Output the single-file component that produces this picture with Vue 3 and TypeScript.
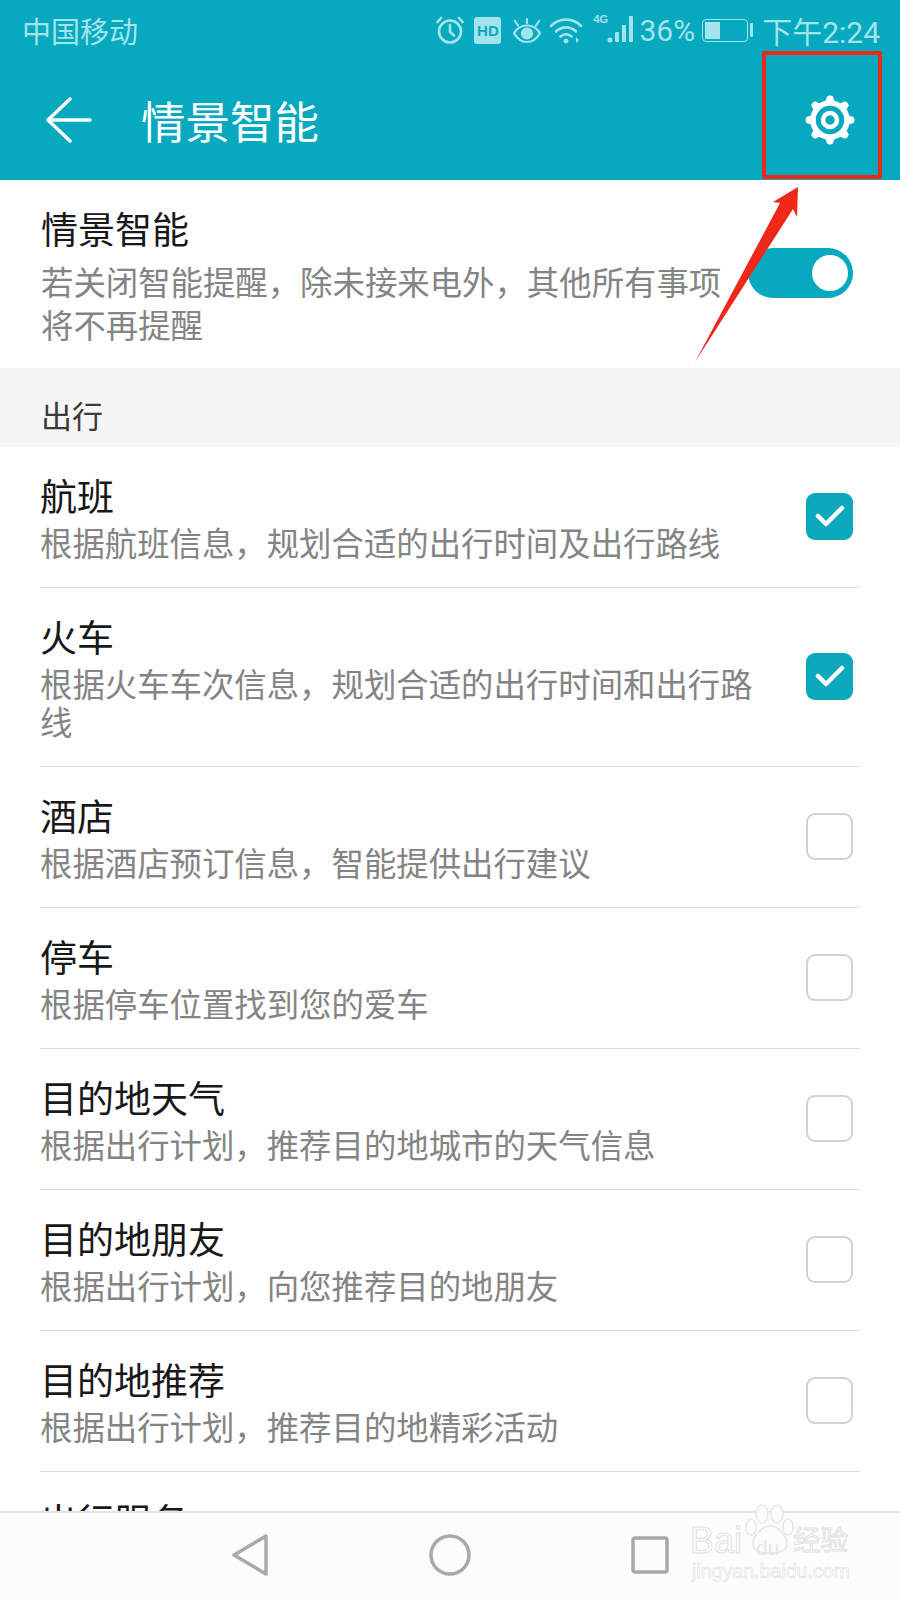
<template>
  <div class="phone">
    <header class="appbar">
      <div class="status">
        <span class="carrier">中国移动</span>
        <div class="status-right">
          <svg class="st-icon" width="28" height="28" viewBox="0 0 28 28" fill="none" stroke="currentColor" stroke-width="2.6" stroke-linecap="round">
            <circle cx="14" cy="15.500" r="11" />
            <path d="M14 9v7l4 3.500M1.500 6 5 2M26.500 6 23 2" />
          </svg>
          <span class="hd">HD</span>
          <svg class="st-icon eye" width="30" height="28" viewBox="0 0 30 28" fill="none" stroke="currentColor" stroke-width="2.200" stroke-linecap="round">
            <path d="M2 17c3-5 7.500-7.500 13-7.500S25 12 28 17c-3 5.500-7.500 9-13 9S5 22.500 2 17Z" />
            <circle cx="15" cy="17.500" r="5" fill="currentColor" />
            <path d="M6 9.500 3 5M24 9.500 27 5M15 7V3" />
          </svg>
          <svg class="st-icon" width="34" height="28" viewBox="0 0 34 28" fill="none" stroke="currentColor" stroke-width="2.600" stroke-linecap="round">
            <path d="M2 10C10 1.500 24 1.500 32 10M7 15.500c5.500-5.500 14.500-5.500 20 0M11.500 20.500c3-3 8-3 11 0" />
            <circle cx="17" cy="25" r="2.400" fill="currentColor" stroke="none" />
            <path d="M27 21v6l3-3Z" fill="currentColor" stroke="none" />
          </svg>
          <div class="signal">
            <span class="four-g">4G</span>
            <svg width="30" height="28" viewBox="0 0 30 28" fill="currentColor">
              <circle cx="3" cy="25" r="2.500" />
              <rect x="8" y="17" width="4" height="10" rx="1" />
              <rect x="15" y="10" width="4" height="17" rx="1" />
              <rect x="22" y="1" width="4" height="26" rx="1" />
            </svg>
          </div>
          <span class="percent">36%</span>
          <div class="battery">
            <div class="battery-body"><i class="battery-level" :style="{ width: batteryLevel + '%' }"></i></div>
            <i class="battery-nub"></i>
          </div>
          <span class="clock">下午2:24</span>
        </div>
      </div>

      <div class="toolbar">
        <svg class="back" width="46" height="46" viewBox="0 0 46 46" fill="none" stroke="currentColor" stroke-width="3.400" stroke-linecap="round" stroke-linejoin="round">
          <path d="M24 2 2 23l22 21M2 23h42" />
        </svg>
        <h1 class="title">情景智能</h1>
        <svg class="gear" width="52" height="52" viewBox="0 0 52 52" fill="none" stroke="#fff">
          <circle cx="26" cy="26" r="17" stroke-width="5.500" />
          <circle cx="26" cy="26" r="7" stroke-width="4.500" />
          <path v-for="a in gearTeeth" :key="a" :transform="`rotate(${a} 26 26)`" d="M21 9 23 2.500Q26 .5 29 2.500L31 9Z" fill="#fff" stroke="none" />
        </svg>
      </div>
    </header>

    <main class="content">
      <section class="master">
        <div class="master-text">
          <div class="row-title">情景智能</div>
          <div class="row-desc master-desc">若关闭智能提醒，除未接来电外，其他所有事项将不再提醒</div>
        </div>
        <div class="switch"><i class="knob"></i></div>
      </section>

      <div class="section-head">出行</div>

      <div class="list">
        <div v-for="item in items" :key="item.title" class="row">
          <div class="row-text">
            <div class="row-title">{{ item.title }}</div>
            <div v-if="item.desc" class="row-desc">{{ item.desc }}</div>
          </div>
          <div v-if="item.desc" class="check" :class="{ on: item.checked }">
            <svg v-if="item.checked" width="30" height="24" viewBox="0 0 30 24" fill="none" stroke="#fff" stroke-width="4.500" stroke-linecap="round" stroke-linejoin="round">
              <path d="M3 12l8 8L27 4" />
            </svg>
          </div>
        </div>
      </div>
    </main>

    <nav class="navbar">
      <svg width="38" height="42" viewBox="0 0 38 42" fill="none" stroke="#a9a9a9" stroke-width="3.500" stroke-linejoin="round">
        <path d="M35 2v38L3 21Z" />
      </svg>
      <svg width="42" height="42" viewBox="0 0 42 42" fill="none" stroke="#a9a9a9" stroke-width="3.500">
        <circle cx="21" cy="21" r="19" />
      </svg>
      <svg width="38" height="38" viewBox="0 0 38 38" fill="none" stroke="#a9a9a9" stroke-width="3.500" stroke-linejoin="round">
        <rect x="2" y="2" width="34" height="34" rx="2" />
      </svg>
    </nav>

    <!-- annotations drawn over the screenshot -->
    <div class="red-box"></div>
    <svg class="red-arrow" width="120" height="190" viewBox="0 0 120 190">
      <path d="M118 2 117 32 113 24 15 177 100 18 93 17Z" fill="#f0281a" />
    </svg>
    <div class="watermark">
      <svg class="paw" width="50" height="52" viewBox="0 0 50 52" fill="#fcfcfc" stroke="#e6e6e6" stroke-width="1.500">
        <ellipse cx="17" cy="11" rx="6" ry="9" />
        <ellipse cx="32" cy="11" rx="6" ry="9" />
        <ellipse cx="6" cy="24" rx="5" ry="8" />
        <ellipse cx="43" cy="24" rx="5" ry="8" />
        <path d="M25 23c-7 0-17 9-17 18 0 6 5 9 17 9s17-3 17-9c0-9-10-18-17-18Z" />
      </svg>
      <span class="wm-bai">Bai</span>
      <span class="wm-du">du</span>
      <span class="wm-cn">经验</span>
      <span class="wm-url">jingyan.baidu.com</span>
    </div>
  </div>
</template>

<script setup lang="ts">
interface Item {
  title: string;
  desc?: string;
  checked?: boolean;
}

const batteryLevel = 36;
const gearTeeth = [0, 45, 90, 135, 180, 225, 270, 315];

const items: Item[] = [
  { title: '航班', desc: '根据航班信息，规划合适的出行时间及出行路线', checked: true },
  { title: '火车', desc: '根据火车车次信息，规划合适的出行时间和出行路线', checked: true },
  { title: '酒店', desc: '根据酒店预订信息，智能提供出行建议' },
  { title: '停车', desc: '根据停车位置找到您的爱车' },
  { title: '目的地天气', desc: '根据出行计划，推荐目的地城市的天气信息' },
  { title: '目的地朋友', desc: '根据出行计划，向您推荐目的地朋友' },
  { title: '目的地推荐', desc: '根据出行计划，推荐目的地精彩活动' },
  { title: '出行服务' },
];
</script>

<style>
html, body { margin: 0; background: #fdfdfd; }
</style>

<style scoped>
.phone {
  position: relative;
  width: 900px;
  height: 1600px;
  display: flex;
  flex-direction: column;
  overflow: hidden;
  background: #fefefe;
  font-family: "Noto Sans CJK SC", "Liberation Sans", sans-serif;
}

.appbar { height: 180px; flex-shrink: 0; background: #07a9bf; color: #fff; }

.status {
  height: 60px;
  display: flex;
  align-items: center;
  justify-content: space-between;
  padding: 0 20px 0 22px;
  color: #a3e4ec;
  font-size: 29px;
}
.status-right { display: flex; align-items: center; }
.st-icon { margin-right: 10px; }
.st-icon.eye { margin-right: 7px; }
.hd {
  width: 27px;
  height: 27px;
  margin-right: 11px;
  border-radius: 3px;
  background: #a3e4ec;
  color: #07a9bf;
  font: 700 15px/27px "Liberation Sans", sans-serif;
  text-align: center;
}
.signal { position: relative; width: 44px; height: 30px; display: flex; justify-content: flex-end; }
.four-g { position: absolute; left: 0; top: -3px; font: 700 11px/14px "Liberation Sans", sans-serif; }
.percent { margin-left: 2px; font-family: "Roboto", sans-serif; font-size: 30px; }
.battery { display: flex; align-items: center; margin-left: 7px; }
.battery-body { width: 46px; height: 23px; box-sizing: border-box; border: 1.500px solid #a3e4ec; border-radius: 4px; padding: 2px; }
.battery-level { display: block; height: 100%; background: #a3e4ec; }
.battery-nub { width: 3px; height: 14px; margin-left: 2px; background: #a3e4ec; border-radius: 1px; }
.clock { margin-left: 9px; font-family: "Roboto", "Noto Sans CJK SC", sans-serif; font-size: 30px; }

.toolbar { height: 120px; display: flex; align-items: center; padding: 0 0 0 46px; }
.back { flex-shrink: 0; margin-right: 49px; }
.title { flex: 1; margin: 0; font-size: 44.500px; font-weight: 400; line-height: 60px; }
.gear { margin-right: 44px; }

.content { flex: 1; min-height: 0; overflow: hidden; }

.row-title { font-size: 37px; line-height: 48px; color: #181818; }
.row-desc { margin-top: 4px; font-size: 32.400px; line-height: 38px; color: #848484; }
.master-desc { margin-top: 7px; line-height: 43px; }

.master {
  height: 188px;
  box-sizing: border-box;
  display: flex;
  align-items: flex-start;
  justify-content: space-between;
  padding: 24px 47px 0 41px;
}
.master-text { width: 690px; }
.switch {
  width: 105px;
  height: 50px;
  margin-top: 44px;
  display: flex;
  align-items: center;
  justify-content: flex-end;
  padding-right: 5px;
  box-sizing: border-box;
  border-radius: 25px;
  background: #07a9bf;
}
.knob { width: 36px; height: 36px; border-radius: 50%; background: #fff; }

.section-head {
  height: 79px;
  box-sizing: border-box;
  padding-left: 41px;
  background: #f5f5f5;
  font-size: 31px;
  line-height: 94px;
  color: #3a3a3a;
  overflow: hidden;
}

.list { padding: 0 40px; }
.row {
  display: flex;
  align-items: center;
  justify-content: space-between;
  padding: 24px 7px 26px 0;
  border-bottom: 1px solid #dedede;
}
.row-text { width: 720px; }
.check {
  width: 47px;
  height: 47px;
  flex-shrink: 0;
  box-sizing: border-box;
  display: flex;
  align-items: center;
  justify-content: center;
  border: 2px solid #d2d2d2;
  border-radius: 9px;
}
.check.on { border: 0; background: #0ca8bd; }

.navbar {
  height: 89px;
  flex-shrink: 0;
  box-sizing: border-box;
  display: flex;
  align-items: center;
  justify-content: center;
  gap: 160px;
  padding-bottom: 3px;
  background: #fcfcfc;
  border-top: 2px solid #e4e4e4;
  position: relative;
}

.red-box {
  position: absolute;
  left: 762px;
  top: 51px;
  width: 120px;
  height: 128px;
  box-sizing: border-box;
  border: 4.500px solid #e8291c;
  border-radius: 2px;
}
.red-arrow { position: absolute; left: 680px; top: 185px; }

.watermark { position: absolute; left: 688px; top: 1500px; width: 172px; height: 90px; font-family: "Liberation Sans", "Noto Sans CJK SC", sans-serif; white-space: nowrap; }
.watermark span { position: absolute; color: #fcfcfc; -webkit-text-stroke: 1px #e2e2e2; }
.paw { position: absolute; left: 57px; top: 3px; }
.watermark .wm-bai { left: 2px; top: 21px; font-size: 36px; line-height: 40px; }
.watermark .wm-du { left: 68px; top: 36px; font-size: 21px; line-height: 24px; color: #e6e6e6; -webkit-text-stroke: 0; }
.watermark .wm-cn { left: 105px; top: 22px; font-size: 27.500px; line-height: 38px; }
.watermark .wm-url { left: 4px; top: 60px; font-size: 19.600px; line-height: 22px; -webkit-text-stroke: 0.600px #e2e2e2; }
</style>
